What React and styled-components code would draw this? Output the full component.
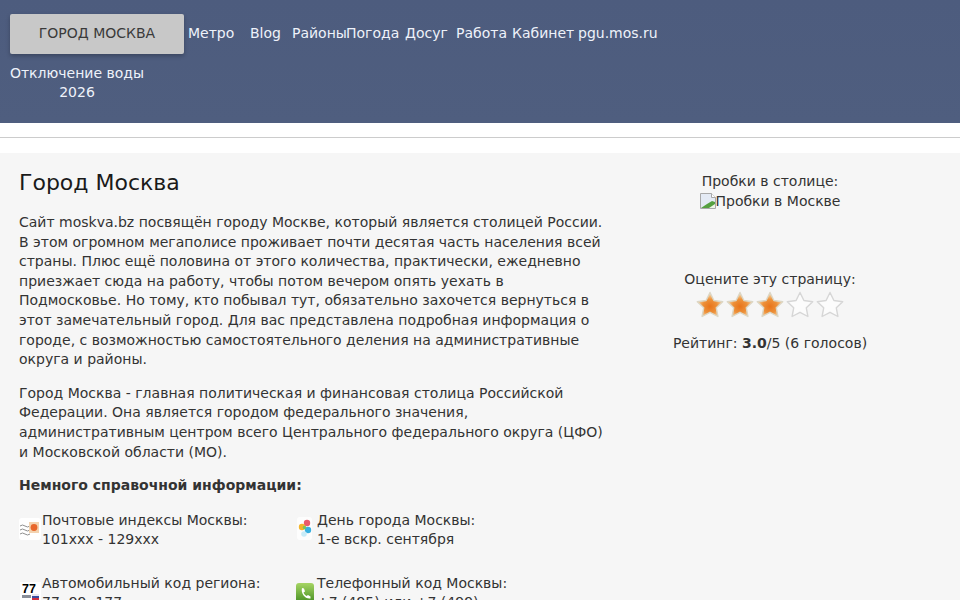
import React from "react";
import styled, { createGlobalStyle } from "styled-components";

const Global = createGlobalStyle`
  html, body { margin: 0; padding: 0; height: 600px; overflow: hidden; background: #fff; }
  body { font-family: "DejaVu Sans", sans-serif; font-size: 14px; line-height: 19.6px; color: #333; }
`;

const Header = styled.header`
  height: 123px;
  box-sizing: border-box;
  padding: 14px 10px 0;
  background: linear-gradient(#4d5c7e, #4f5e7f);
  color: #eef2fa;
`;
const TopRow = styled.div`
  display: flex;
  align-items: flex-start;
  gap: 4px;
`;
const CityButton = styled.a`
  width: 174px;
  height: 40px;
  display: flex;
  align-items: center;
  justify-content: center;
  background: #c8c8c8;
  color: #3a3a3a;
  border-radius: 2px;
  box-shadow: 0 2px 4px rgba(0, 0, 0, 0.25);
  font-size: 14px;
`;
const Nav = styled.nav`
  display: flex;
  height: 39px;
  align-items: center;
`;
const NavItem = styled.a`
  width: ${(p) => p.$w}px;
  white-space: nowrap;
  color: #eef2fa;
`;
const SubLink = styled.a`
  display: block;
  width: 136px;
  margin: 10px 0 0 -1px;
  line-height: 19px;
  text-align: center;
  color: #eef2fa;
`;
const Gap = styled.div`
  height: 30px;
  background: #fff;
  display: flex;
  flex-direction: column;
  padding-top: 14px;
  box-sizing: border-box;
`;
const Rule = styled.hr`
  width: 100%;
  height: 1px;
  margin: 0;
  border: 0;
  background: #ccc;
`;
const Main = styled.main`
  background: #f6f6f6;
  height: 447px;
  box-sizing: border-box;
  padding: 16px 19px 0;
  display: flex;
  overflow: hidden;
`;
const Content = styled.div`
  width: 590px;
  flex: none;
`;
const Title = styled.h1`
  margin: 0 0 16px;
  font-size: 22px;
  line-height: 28px;
  font-weight: 400;
  color: #1a1a1a;
`;
const Para = styled.p`
  margin: 0 0 14px;
  width: 590px;
`;
const InfoGrid = styled.div`
  display: grid;
  grid-template-columns: 277px 277px;
  grid-auto-rows: 63px;
  margin-top: 15px;
`;
const Info = styled.div`
  display: flex;
`;
const IconBox = styled.svg`
  width: 22px;
  height: 24px;
  flex: none;
  margin: 6px ${(p) => p.$after}px 0 0;
`;
const Side = styled.aside`
  margin-left: 46px;
  width: 230px;
  text-align: center;
  padding-top: 3px;
`;
const Traffic = styled.div`
  height: 98px;
`;
const BrokenImg = styled.span`
  display: inline-flex;
  align-items: center;
`;
const Stars = styled.div`
  display: flex;
  justify-content: center;
  height: 30px;
  margin: 0 0 14px;
`;

const StarPath = "M15 2.5l3.9 8 8.8 1.2-6.400 6.100 1.600 8.700L15 22.300l-7.900 4.200 1.600-8.700-6.400-6.100 8.800-1.200z";
const Star = ({ on, id }) => (
  <svg width="30" height="30" viewBox="0 0 30 30">
    <defs>
      <radialGradient id={id} cx="50%" cy="58%" r="52%">
        <stop offset="0%" stopColor="#e8741a" />
        <stop offset="55%" stopColor="#ed913a" />
        <stop offset="100%" stopColor="#f7d6a8" />
      </radialGradient>
    </defs>
    <path
      d={StarPath}
      fill={on ? `url(#${id})` : "#fcfcfc"}
      stroke={on ? "#dcd6c4" : "#d6d6d6"}
      strokeWidth="1.4"
      strokeLinejoin="round"
    />
  </svg>
);

const Broken = () => (
  <svg width="16" height="16" viewBox="0 0 16 16">
    <path d="M.5.5h11l4 4v11H.5z" fill="#e4eaf4" stroke="#a8a8a8" />
    <path d="M11.5.5v4h4" fill="#fff" stroke="#a8a8a8" />
    <path d="M1 15l6-4 5-3 3 1v6z" fill="#55a040" />
    <path d="M9 15l6-4v4z" fill="#eef5e8" />
  </svg>
);

const PostIcon = () => (
  <IconBox $after={1} viewBox="0 0 22 24">
    <rect x="0" y="1" width="22" height="22" rx="3" fill="#fff" />
    <path d="M1 9q2.500-2 5 0t5 0M1 13q2.500-2 5 0t5 0M1 17q2.500-2 5 0t5 0" stroke="#8f8f8f" fill="none" />
    <rect x="10" y="5" width="10" height="11" fill="#f3d3b0" />
    <circle cx="15" cy="10.500" r="3.400" fill="#e8662a" />
  </IconBox>
);
const PetalsIcon = () => (
  <IconBox $after={-1} viewBox="0 0 22 24">
    <rect x="1" y="0" width="15" height="23" rx="3" fill="#fdfdfd" />
    <circle cx="11" cy="6" r="3.200" fill="#ea5a6a" />
    <circle cx="6" cy="10" r="3.200" fill="#f3b52c" />
    <circle cx="12" cy="13" r="3.200" fill="#38b0e0" />
    <circle cx="8.500" cy="10.500" r="1.800" fill="#7cc25a" />
    <circle cx="8" cy="17" r="2.800" fill="#c8ecf8" />
  </IconBox>
);
const PlateIcon = () => (
  <IconBox $after={1} viewBox="0 0 22 24">
    <rect x="1" y="2" width="21" height="22" fill="#fff" />
    <text x="10" y="13" textAnchor="middle" fontSize="12.500" fontWeight="700" fontFamily="Liberation Sans" fill="#000">77</text>
    <rect x="13" y="14" width="7" height="2" fill="#e8e8f0" />
    <rect x="13" y="16" width="7" height="2" fill="#3a4ea0" />
    <rect x="13" y="18" width="7" height="2" fill="#d03040" />
    <rect x="3" y="15" width="9" height="3" fill="#8a8f99" />
  </IconBox>
);
const PhoneIcon = () => (
  <IconBox $after={-1} viewBox="0 0 22 24">
    <defs>
      <linearGradient id="ph" x1="0" y1="0" x2="0" y2="1">
        <stop offset="0%" stopColor="#a6d564" />
        <stop offset="100%" stopColor="#3f8a1e" />
      </linearGradient>
    </defs>
    <rect x="0" y="3" width="18" height="21" rx="3" fill="url(#ph)" />
    <path d="M6 8l2 .5 1 3-1.500 1c.5 1.500 1.500 2.500 3 3.500l1.500-1 2.500 1.500v2c-5 1-10-5-8.500-10.500z" fill="#fff" />
  </IconBox>
);

const navItems = [
  ["Метро", 62], ["Blog", 42], ["Районы", 54], ["Погода", 59],
  ["Досуг", 51], ["Работа", 56], ["Кабинет", 66], ["pgu.mos.ru", 90],
];

const infos = [
  [PostIcon, "Почтовые индексы Москвы:", "101xxx - 129xxx"],
  [PetalsIcon, "День города Москвы:", "1-е вскр. сентября"],
  [PlateIcon, "Автомобильный код региона:", "77, 99, 177, ..."],
  [PhoneIcon, "Телефонный код Москвы:", "+7 (495) или +7 (499)"],
];

export default function App() {
  return (
    <>
      <Global />
      <Header>
        <TopRow>
          <CityButton>ГОРОД МОСКВА</CityButton>
          <Nav>
            {navItems.map(([t, w]) => (
              <NavItem key={t} $w={w}>{t}</NavItem>
            ))}
          </Nav>
        </TopRow>
        <SubLink>Отключение воды 2026</SubLink>
      </Header>
      <Gap><Rule /></Gap>
      <Main>
        <Content>
          <Title>Город Москва</Title>
          <Para>
            Сайт moskva.bz посвящён городу Москве, который является столицей России. В этом огромном мегаполисе проживает почти десятая часть населения всей страны. Плюс ещё половина от этого количества, практически, ежедневно приезжает сюда на работу, чтобы потом вечером опять уехать в Подмосковье. Но тому, кто побывал тут, обязательно захочется вернуться в этот замечательный город. Для вас представлена подробная информация о городе, с возможностью самостоятельного деления на административные округа и районы.
          </Para>
          <Para>
            Город Москва - главная политическая и финансовая столица Российской Федерации. Она является городом федерального значения, административным центром всего Центрального федерального округа (ЦФО) и Московской области (МО).
          </Para>
          <Para><b>Немного справочной информации:</b></Para>
          <InfoGrid>
            {infos.map(([Icon, a, b]) => (
              <Info key={a}>
                <Icon />
                <div>{a}<br />{b}</div>
              </Info>
            ))}
          </InfoGrid>
        </Content>
        <Side>
          <Traffic>
            Пробки в столице:<br />
            <BrokenImg><Broken />Пробки в Москве</BrokenImg>
          </Traffic>
          <div>Оцените эту страницу:</div>
          <Stars>
            {[1, 2, 3, 4, 5].map((n) => <Star key={n} id={`s${n}`} on={n <= 3} />)}
          </Stars>
          <div>Рейтинг: <b>3.0</b>/5 (6 голосов)</div>
        </Side>
      </Main>
    </>
  );
}
